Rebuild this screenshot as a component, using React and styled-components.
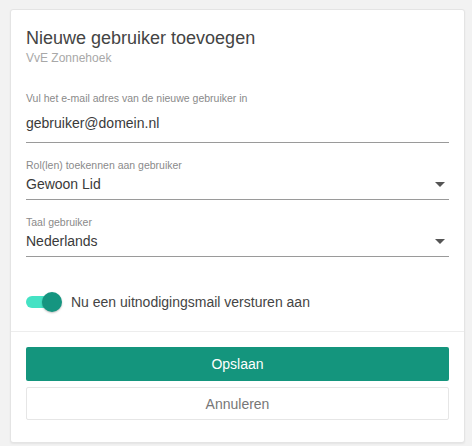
import styled, { createGlobalStyle } from 'styled-components';

const Global = createGlobalStyle`
  html, body { margin:0; padding:0; background:#f2f2f2; }
  body { font-family: "Liberation Sans", Arial, sans-serif; }
`;

export default function App() {
  return (
    <>
      <Global />
      <Page>
        <Card>
          <Body>
            <Title>Nieuwe gebruiker toevoegen</Title>
            <Sub>VvE Zonnehoek</Sub>
            <Field $top={27}>
              <Label>Vul het e-mail adres van de nieuwe gebruiker in</Label>
              <Value $gap={10}>gebruiker@domein.nl</Value>
            </Field>
            <Field $top={16}>
              <Label>Rol(len) toekennen aan gebruiker</Label>
              <Value>Gewoon Lid<Caret /></Value>
            </Field>
            <Field $top={16}>
              <Label>Taal gebruiker</Label>
              <Value>Nederlands<Caret /></Value>
            </Field>
            <ToggleRow>
              <Toggle>
                <Knob />
              </Toggle>
              <ToggleText>Nu een uitnodigingsmail versturen aan</ToggleText>
            </ToggleRow>
          </Body>
          <Footer>
            <Primary>Opslaan</Primary>
            <Secondary>Annuleren</Secondary>
          </Footer>
        </Card>
      </Page>
    </>
  );
}

/* ============ styles ============ */

const Page = styled.div`
  padding:9px 7px 5px 10px;
`;

const Card = styled.section`
  background:#fff;
  border:1px solid #e4e4e4;
  border-radius:3px;
  box-shadow:0 1px 2px rgba(0,0,0,.06);
`;

const Body = styled.div`
  padding:17px 15px 21px 15px;
`;

const Title = styled.h2`
  margin:0; font-weight:400; font-size:18px; line-height:22px; color:#444;
`;

const Sub = styled.div`
  font-size:12px; line-height:14px; color:#a8a8a8; margin-top:2px;
`;

const Field = styled.div`
  margin-top:${p => p.$top}px;
  border-bottom:1px solid #9a9a9a;
`;

const Label = styled.div`
  font-size:10.5px; line-height:12px; color:#8a8a8a;
`;

const Value = styled.div`
  display:flex; align-items:center; justify-content:space-between;
  font-size:14px; line-height:18px; color:#3a3a3a;
  margin-top:${p => p.$gap ?? 4}px;
  padding-bottom:${p => p.$gap ? 10 : 6}px;
`;

const Caret = styled.span`
  width:0; height:0; margin-right:4px;
  border-left:5px solid transparent;
  border-right:5px solid transparent;
  border-top:5px solid #555;
`;

const ToggleRow = styled.div`
  display:flex; align-items:center; gap:9px;
  margin-top:37px;
`;

const Toggle = styled.div`
  position:relative; width:34px; height:12px; border-radius:6px;
  background:#44e2c4; margin-right:2px;
`;

const Knob = styled.span`
  position:absolute; right:-2px; top:-4px;
  width:20px; height:20px; border-radius:50%;
  background:#159580;
  box-shadow:0 1px 2px rgba(0,0,0,.25);
`;

const ToggleText = styled.span`
  font-size:14px; color:#444;
`;

const Footer = styled.div`
  border-top:1px solid #ededed;
  padding:15px 15px 22px 15px;
  display:flex; flex-direction:column; gap:6px;
`;

const Primary = styled.button`
  height:34px; border:0; border-radius:2px;
  background:#14957d; color:#fff;
  font-family:inherit; font-size:14px;
`;

const Secondary = styled.button`
  height:33px; border:1px solid #e6e6e6; border-radius:2px;
  background:#fff; color:#777;
  font-family:inherit; font-size:14px;
`;
